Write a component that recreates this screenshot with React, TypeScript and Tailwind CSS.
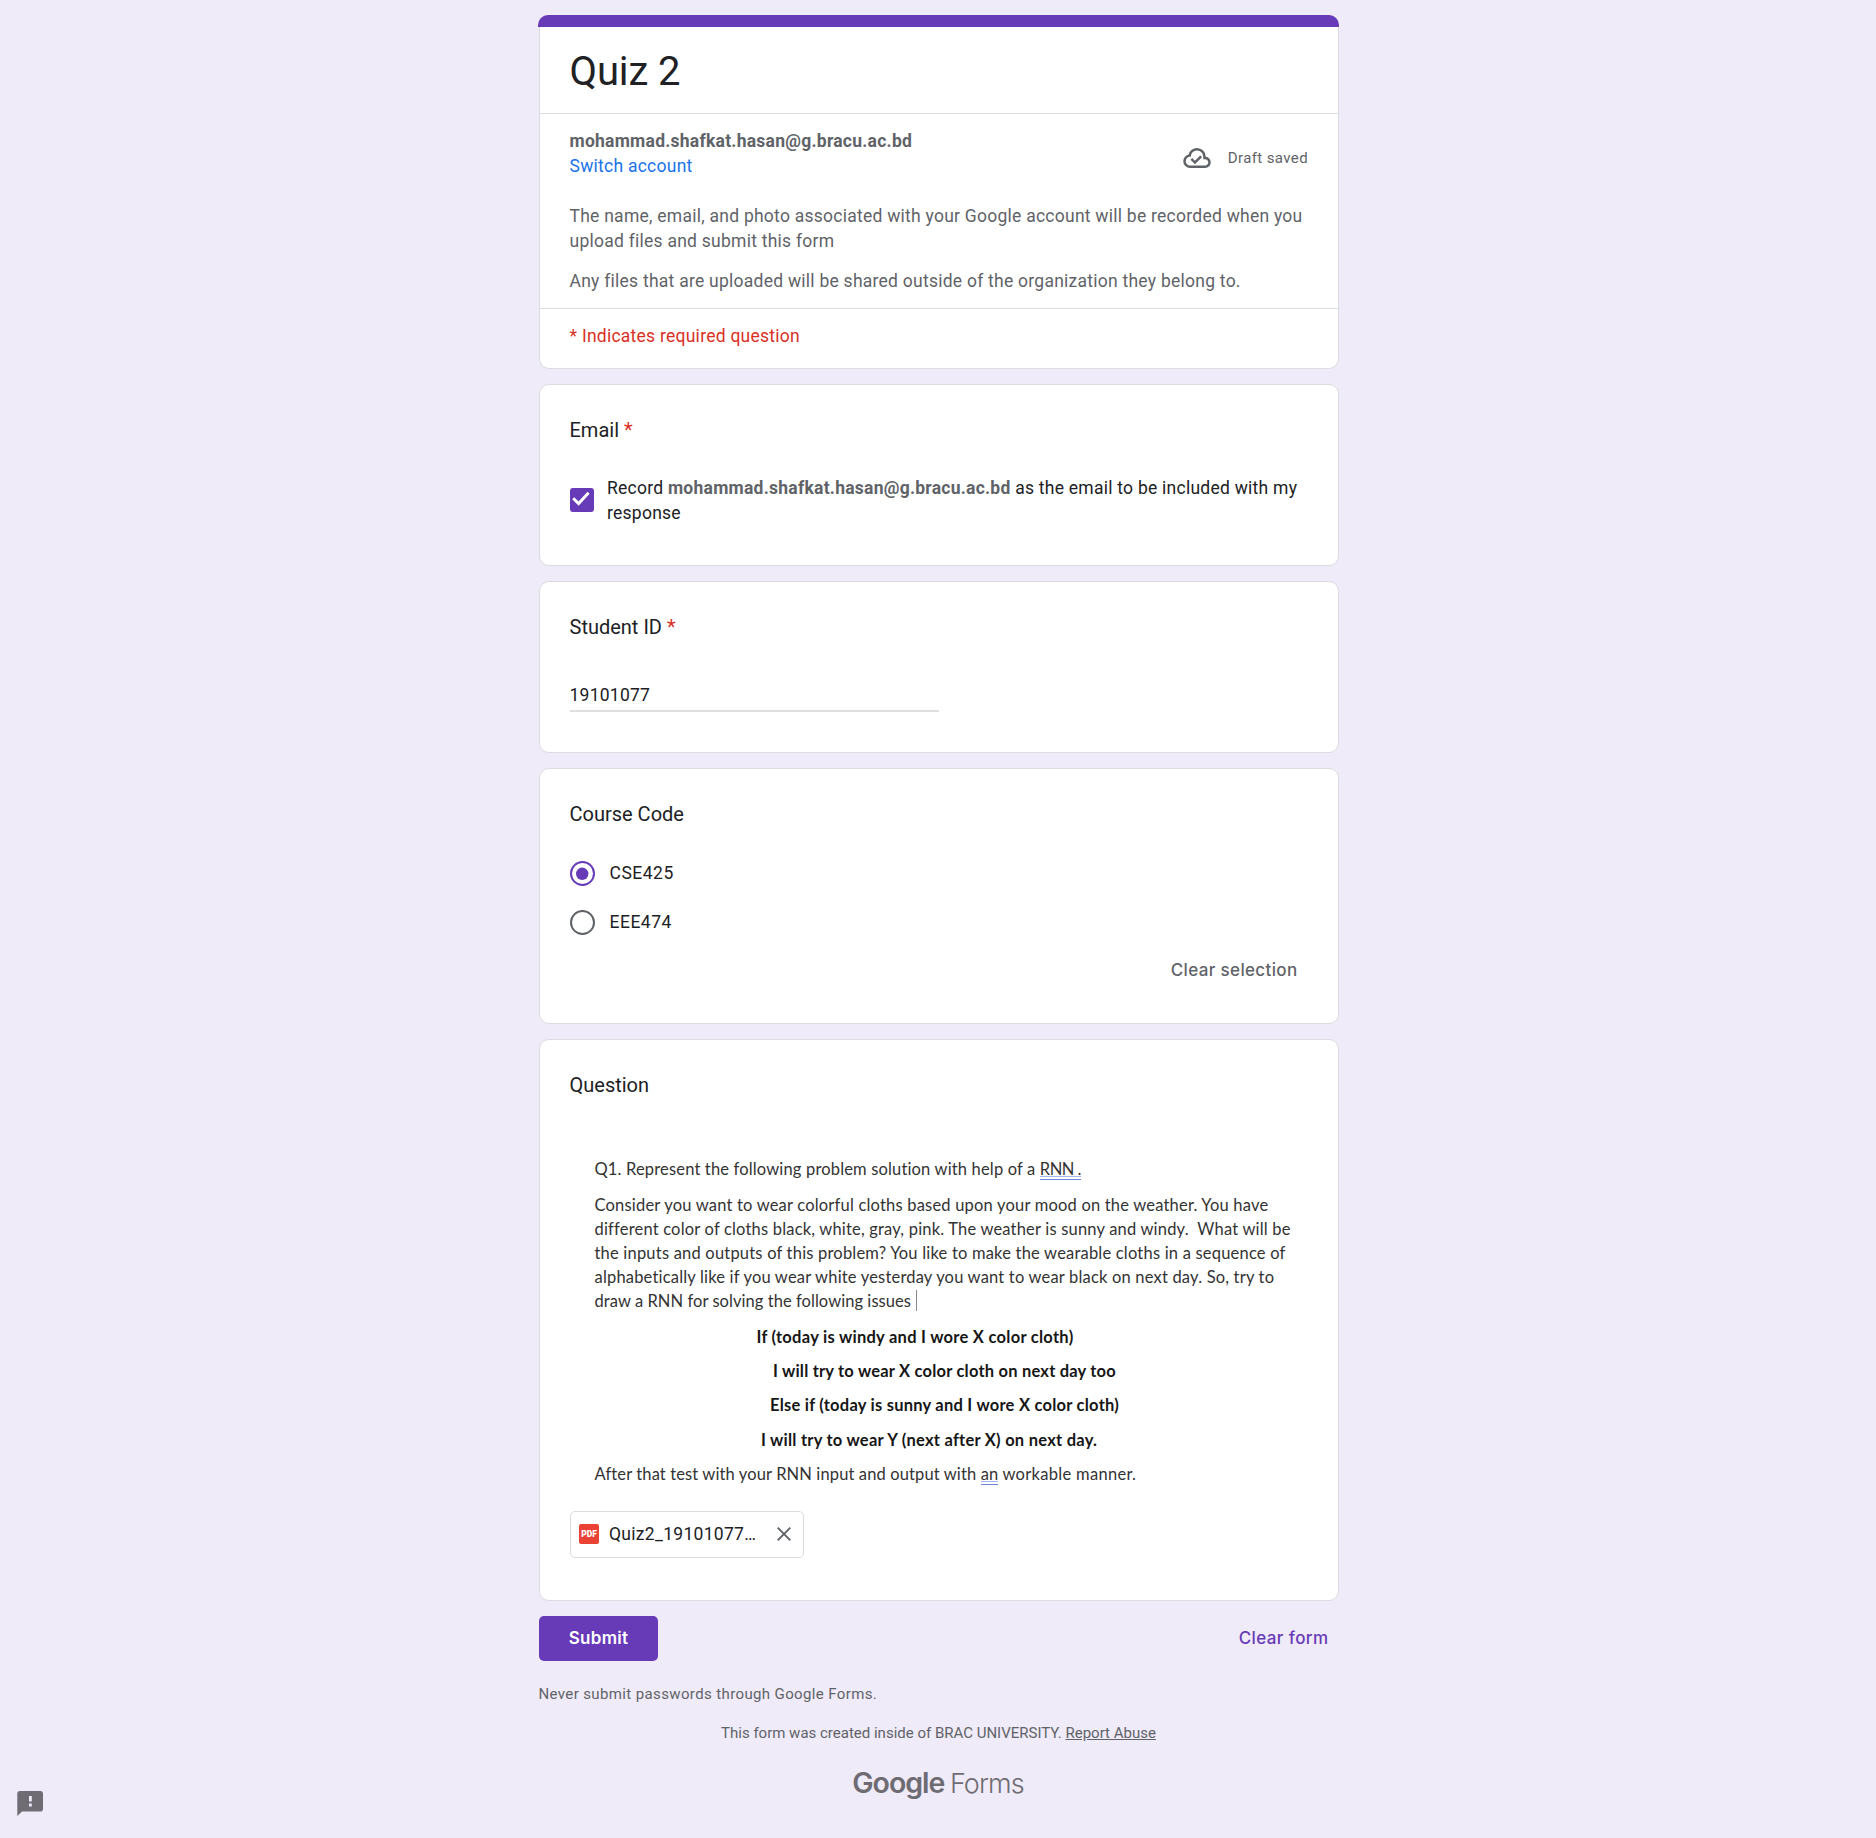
import type { ReactNode } from "react";

const EMAIL = "mohammad.shafkat.hasan@g.bracu.ac.bd";

function Card({ className, children }: { className: string; children: ReactNode }) {
  return (
    <section
      className={`mb-[15px] w-[800px] rounded-[10px] border border-[#dadce0] bg-white pr-[30px] pl-[29.5px] pt-[30px] ${className}`}
    >
      {children}
    </section>
  );
}

function Heading({ children, required }: { children: ReactNode; required?: boolean }) {
  return (
    <h2 className="text-[20px] leading-[30px] text-[#202124]">
      {children}
      {required && <span className="text-[#d93025]"> *</span>}
    </h2>
  );
}

function Radio({ label, checked }: { label: string; checked?: boolean }) {
  return (
    <div className="flex h-[49px] items-center">
      <svg className="ml-[0.5px] size-[25px]" viewBox="0 0 25 25" fill="none">
        <circle cx="12.5" cy="12.5" r="11.5" stroke={checked ? "#673ab7" : "#5f6368"} strokeWidth="2" />
        {checked && <circle cx="12.2" cy="12.8" r="6.2" fill="#673ab7" />}
      </svg>
      <span className="ml-[14.5px] text-[17.5px] leading-[25px] tracking-[0.5px] text-[#202124]">{label}</span>
    </div>
  );
}

function CloudDone() {
  return (
    <svg className="size-[30px]" viewBox="0 -960 960 960" fill="#5f6368">
      <path d="m414-280 226-226-58-58-169 169-84-84-57 57 142 142ZM260-160q-91 0-155.5-63T40-377q0-78 47-139t123-78q25-92 100-149t170-57q117 0 198.5 81.5T760-520q69 8 114.5 59.5T920-340q0 75-52.5 127.5T740-160H260Zm0-80h480q42 0 71-29t29-71q0-42-29-71t-71-29h-60v-80q0-83-58.5-141.5T480-720q-83 0-141.5 58.5T280-520h-20q-58 0-99 41t-41 99q0 58 41 99t99 41Z" />
    </svg>
  );
}

function Flagged({ children, className = "" }: { children: ReactNode; className?: string }) {
  return (
    <span className={`relative ${className}`}>
      {children}
      <span className="absolute inset-x-0 bottom-[-1px] h-1 border-t border-b border-t-[#aab4f0] border-b-[#6d83dd]" />
    </span>
  );
}

export default function App() {
  return (
    <div className="relative h-[1838px] w-full overflow-hidden bg-[#f0ebf8] pl-[539px] pt-[15px] font-['Roboto',sans-serif]">
      <div className="-ml-px h-3 w-[801px] rounded-t-[10px] bg-[#673ab7]" />
      <section className="mb-[15px] h-[342px] w-[800px] rounded-b-[10px] border border-t-0 border-[#dadce0] bg-white">
        <div className="h-[87px] border-b border-[#dadce0] pl-[29.5px] pt-5">
          <h1 className="text-[40px] leading-[50px] tracking-[-0.1px] text-[#202124]">Quiz 2</h1>
        </div>
        <div className="h-[195px] border-b border-[#dadce0] pr-[30px] pl-[29.5px] pt-[15px] text-[17.5px] leading-[25px] tracking-[0.25px] text-[#5f6368]">
          <div className="flex justify-between">
            <div>
              <p className="font-bold">{EMAIL}</p>
              <p className="text-[#1a73e8]">Switch account</p>
            </div>
            <div className="mt-3.5 flex h-[30px] items-center gap-[15.5px] text-[15px] tracking-[0.375px]">
              <CloudDone />
              <span>Draft saved</span>
            </div>
          </div>
          <p className="mt-[25px] whitespace-nowrap">
            The name, email, and photo associated with your Google account will be recorded when you
            <br />
            upload files and submit this form
          </p>
          <p className="mt-[15px]">Any files that are uploaded will be shared outside of the organization they belong to.</p>
        </div>
        <p className="pl-[29.5px] pt-[15px] text-[17.5px] leading-[25px] tracking-[0.25px] text-[#d93025]">
          * Indicates required question
        </p>
      </section>

      <Card className="h-[182px]">
        <Heading required>Email</Heading>
        <div className="mt-[31px] flex items-start">
          <svg className="ml-[0.5px] mt-3 size-6 shrink-0" viewBox="0 0 24 24" fill="none">
            <rect width="24" height="24" rx="3" fill="#673ab7" />
            <path d="M3.2 10.2 8.6 15.6 18.6 4.8" stroke="#fff" strokeWidth="2.9" />
          </svg>
          <p className="ml-[13px] whitespace-nowrap text-[17.5px] leading-[25px] tracking-[0.25px] text-[#202124]">
            Record <b className="text-[#5f6368]">{EMAIL}</b> as the email to be included with my
            <br />
            response
          </p>
        </div>
      </Card>

      <Card className="h-[172px]">
        <Heading required>Student ID</Heading>
        <p className="mt-10 pt-[0.5px] text-[17.5px] leading-[25px] tracking-[0.25px] text-[#202124]">19101077</p>
        <div className="ml-[0.5px] mt-[2.5px] h-0.5 w-[369px] bg-[#dfdfe0]" />
      </Card>

      <Card className="h-[256px]">
        <Heading>Course Code</Heading>
        <div className="mt-5">
          <Radio label="CSE425" checked />
          <Radio label="EEE474" />
        </div>
        <div className="flex h-[45px] items-center justify-end pr-[10.5px] pt-0.5 font-['Inter',sans-serif] text-[17px] font-medium tracking-[0.35px] text-[#5f6368]">
          Clear selection
        </div>
      </Card>

      <Card className="h-[562px]">
        <Heading>Question</Heading>
        <div className="h-[411px] whitespace-pre pt-[57px] font-['Lato',sans-serif] text-[16.5px] leading-6 text-[#333]">
          <div className="pl-[25px]">
            <p className="tracking-[0.16px]">
              Q1. Represent the following problem solution with help of a{" "}
              <Flagged className="tracking-[-0.5px]">RNN .</Flagged>
            </p>
            <p className="mt-3 tracking-[0.194px]">Consider you want to wear colorful cloths based upon your mood on the weather. You have</p>
            <p className="tracking-[0.187px]">different color of cloths black, white, gray, pink. The weather is sunny and windy.  What will be</p>
            <p className="tracking-[0.2px]">the inputs and outputs of this problem? You like to make the wearable cloths in a sequence of</p>
            <p className="tracking-[0.185px]">alphabetically like if you wear white yesterday you want to wear black on next day. So, try to</p>
            <p className="flex tracking-[0.056px]">
              draw a RNN for solving the following issues
              <span className="ml-[5px] mt-px h-[21px] w-px bg-[#888]" />
            </p>
          </div>
          <div className="mt-[7px] font-bold leading-[34.2px] text-[#161616]">
            <p className="pl-[187px] tracking-[0.27px]">If (today is windy and I wore X color cloth)</p>
            <p className="pl-[203.5px] tracking-[0.206px]">I will try to wear X color cloth on next day too</p>
            <p className="pl-[200.5px] tracking-[0.237px]">Else if (today is sunny and I wore X color cloth)</p>
            <p className="pl-[191.5px] tracking-[0.25px]">I will try to wear Y (next after X) on next day.</p>
          </div>
          <p className="pl-[25px] leading-[34.2px] tracking-[0.12px]">
            After that test with your RNN input and output with <Flagged>an</Flagged>
            <span className="tracking-[0.3px]"> workable manner.</span>
          </p>
        </div>
        <div className="ml-[0.5px] flex h-[47px] w-[234px] items-center rounded-[5px] border border-[#dadce0]">
          <span className="mb-px ml-2 flex size-5 items-center justify-center rounded-[2px] bg-[#ea4335] text-[8.5px] font-black leading-none text-white">
            PDF
          </span>
          <span className="ml-2.5 w-[148px] whitespace-nowrap text-[17.5px] leading-[25px] tracking-[0.3px] text-[#202124]">
            Quiz2_19101077…
          </span>
          <svg className="mb-px ml-5 size-[14px]" viewBox="0 0 14 14" stroke="#5f6368" strokeWidth="1.9">
            <path d="M.7.7 13.3 13.3M13.3.7.7 13.3" />
          </svg>
        </div>
      </Card>

      <div className="flex h-[45px] w-[800px] items-center justify-between font-['Inter',sans-serif] text-[17px]">
        <button className="h-[45px] w-[119px] rounded-[5px] bg-[#673ab7] font-semibold tracking-[0.28px] text-white">Submit</button>
        <span className="pr-[10.5px] font-medium tracking-[0.4px] text-[#673ab7]">Clear form</span>
      </div>
      <p className="-ml-[0.5px] mt-[23px] text-[15px] leading-5 tracking-[0.375px] text-[#5f6368]">
        Never submit passwords through Google Forms.
      </p>
      <p className="mt-[19px] w-[799px] text-center text-[15px] leading-5 text-[#5f6368]">
        This form was created inside of BRAC UNIVERSITY. <span className="underline">Report Abuse</span>
      </p>
      <div className="mt-[18px] flex w-[798px] items-baseline justify-center gap-[5.5px] font-['Inter',sans-serif] leading-[44px] text-[#6e6b73]">
        <span className="text-[28.5px] font-semibold tracking-[-1px]">Google</span>
        <span className="text-[27px] font-light tracking-[-0.9px]">Forms</span>
      </div>

      <svg className="absolute left-[17px] top-[1791px] h-[25px] w-[26px]" viewBox="0 0 26 25" fill="#6f6c74">
        <path
          fillRule="evenodd"
          d="M2.8 0H23.5C24.9 0 26 1.1 26 2.5V18C26 19.4 24.9 20.6 23.5 20.6H5L.3 25V2.5C.3 1.1 1.4 0 2.8 0ZM12 5V10.5H14.8V5ZM12 12.6V15.4H14.8V12.6Z"
        />
      </svg>
    </div>
  );
}
